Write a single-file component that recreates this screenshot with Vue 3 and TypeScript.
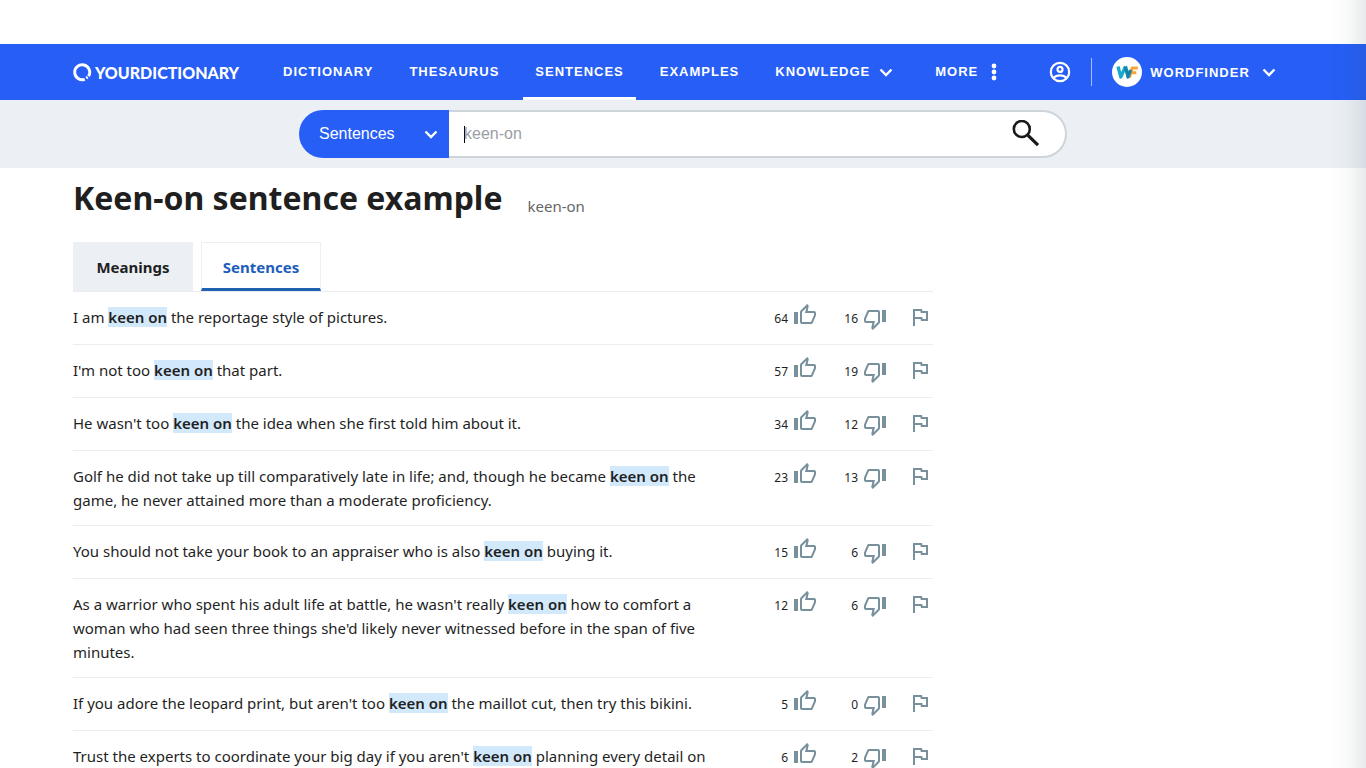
<script setup lang="ts">
import { ref } from 'vue'

interface Sentence {
  before: string
  after: string
  up: number
  down: number
}

const term = 'keen on'
const query = ref('')
const links: string[] = ['Dictionary', 'Thesaurus', 'Sentences', 'Examples']
const sentences: Sentence[] = [
  { before: 'I am ', after: ' the reportage style of pictures.', up: 64, down: 16 },
  { before: "I'm not too ", after: ' that part.', up: 57, down: 19 },
  { before: "He wasn't too ", after: ' the idea when she first told him about it.', up: 34, down: 12 },
  { before: 'Golf he did not take up till comparatively late in life; and, though he became ', after: ' the game, he never attained more than a moderate proficiency.', up: 23, down: 13 },
  { before: 'You should not take your book to an appraiser who is also ', after: ' buying it.', up: 15, down: 6 },
  { before: "As a warrior who spent his adult life at battle, he wasn't really ", after: " how to comfort a woman who had seen three things she'd likely never witnessed before in the span of five minutes.", up: 12, down: 6 },
  { before: "If you adore the leopard print, but aren't too ", after: ' the maillot cut, then try this bikini.', up: 5, down: 0 },
  { before: "Trust the experts to coordinate your big day if you aren't ", after: ' planning every detail on', up: 6, down: 2 },
]
</script>

<template>
  <div class="page">
    <header class="bar">
      <a class="logo" href="#">
        <svg width="19" height="19" viewBox="0 0 19 19" fill="none" stroke="#fff" stroke-width="2.9">
          <path d="M11.800 16.300A7.500 7.500 0 1 1 15.600 13.200" />
          <path d="M13.200 13.400l1.500 2.400" stroke-width="1.800" />
        </svg>
        <span>YOURDICTIONARY</span>
      </a>
      <nav class="nav">
        <a v-for="l in links" :key="l" href="#" class="item" :class="{ active: l === 'Sentences' }">{{ l }}</a>
        <button type="button" class="item">
          Knowledge
          <svg class="chev" width="14" height="9" viewBox="0 0 14 9"><path d="M1.500 1.500L7 7l5.500-5.500" /></svg>
        </button>
        <button type="button" class="item more">
          More
          <svg width="6" height="18" viewBox="0 0 6 18" fill="#fff"><circle cx="3" cy="3" r="2.400" /><circle cx="3" cy="9" r="2.400" /><circle cx="3" cy="15" r="2.400" /></svg>
        </button>
      </nav>
      <div class="account">
        <button type="button" class="user" aria-label="Account">
          <svg width="22" height="22" viewBox="0 0 22 22" fill="none" stroke="#fff" stroke-width="2.200">
            <circle cx="11" cy="11" r="9.200" /><circle cx="11" cy="8.400" r="2.500" /><path d="M4.400 17c3.400-3.500 9.800-3.500 13.200 0" />
          </svg>
        </button>
        <button type="button" class="item finder">
          <svg width="30" height="30" viewBox="0 0 30 30" fill="none" stroke-width="3.300" stroke-linejoin="round">
            <circle cx="15" cy="15" r="15" fill="#fff" />
            <path d="M25.800 11h-5.600l-2.800 9.500M19.500 15.700h4.800" stroke="#f7a334" stroke-width="3" />
            <path d="M6 9.500l2.800 10.500L13.500 9.500" stroke="#19aacb" />
            <path d="M13.500 9.500L16 20l2.600-7" stroke="#1584ad" />
          </svg>
          Wordfinder
          <svg class="chev" width="14" height="9" viewBox="0 0 14 9"><path d="M1.500 1.500L7 7l5.500-5.500" /></svg>
        </button>
      </div>
    </header>

    <form class="search" role="search" @submit.prevent>
      <div class="pill">
        <div class="scope">
          <select aria-label="Search in">
            <option>Sentences</option>
          </select>
          <svg class="chev" width="14" height="9" viewBox="0 0 14 9"><path d="M1.500 1.500L7 7l5.500-5.500" /></svg>
        </div>
        <div class="field">
          <i class="caret"></i>
          <input v-model="query" type="text" placeholder="keen-on" aria-label="Search term" />
          <button type="submit" aria-label="Search">
            <svg width="28" height="28" viewBox="0 0 28 28" fill="none" stroke="#1a1a1a" stroke-width="2.600"><circle cx="9.800" cy="9" r="8" /><path d="M15.500 14.800L26 25.200" stroke-width="3.200" /></svg>
          </button>
        </div>
      </div>
    </form>

    <main class="content">
      <div class="heading">
        <h1>Keen-on sentence example</h1>
        <span>keen-on</span>
      </div>
      <nav class="tabs">
        <a href="#">Meanings</a>
        <a href="#" class="on">Sentences</a>
      </nav>
      <ul class="list">
        <li v-for="(s, i) in sentences" :key="i">
          <p>{{ s.before }}<b>{{ term }}</b>{{ s.after }}</p>
          <div class="votes">
            <button type="button" class="up" aria-label="Like">
              {{ s.up }}
              <svg width="24" height="24" viewBox="0 0 24 24"><path d="M9 21h9c.83 0 1.540-.5 1.840-1.220l3.020-7.050c.09-.23.14-.47.14-.73v-2c0-1.100-.9-2-2-2h-6.310l.95-4.570.03-.32c0-.41-.17-.79-.44-1.060L14.170 1 7.580 7.590C7.220 7.950 7 8.450 7 9v10c0 1.100.9 2 2 2zM9 9l4.340-4.340L12 10h9v2l-3 7H9V9zM1 9h4v12H1z" /></svg>
            </button>
            <button type="button" class="down" aria-label="Dislike">
              {{ s.down }}
              <svg width="24" height="24" viewBox="0 0 24 24"><path d="M15 3H6c-.83 0-1.540.5-1.840 1.220l-3.020 7.050c-.09.230-.14.470-.14.730v2c0 1.100.9 2 2 2h6.310l-.95 4.570-.03.320c0 .410.170.790.440 1.060L9.830 23l6.590-6.590c.36-.36.580-.86.580-1.410V5c0-1.100-.9-2-2-2zm0 12l-4.340 4.340L12 14H3v-2l3-7h9v10zm4-12h4v12h-4z" /></svg>
            </button>
            <button type="button" class="flag" aria-label="Report">
              <svg width="24" height="24" viewBox="0 0 24 24"><path d="M12.360 6l.4 2H18v6h-3.360l-.4-2H7V6h5.360M14 4H5v17h2v-7h5.600l.4 2h7V6h-5.600L14 4z" /></svg>
            </button>
          </div>
        </li>
      </ul>
    </main>
    <div class="edge"></div>
  </div>
</template>

<style>
body {
  margin: 0;
  background: #fff;
}
</style>

<style scoped>
* {
  box-sizing: border-box;
}
.page {
  padding-top: 44px;
  color: #1f1f1f;
  font-family: 'Noto Sans', sans-serif;
}
button {
  padding: 0;
  border: 0;
  background: none;
  color: inherit;
  font: inherit;
  cursor: pointer;
}
a {
  color: inherit;
  text-decoration: none;
}
svg {
  display: block;
  flex: none;
}
.chev {
  fill: none;
  stroke: #fff;
  stroke-width: 2.4;
}
.bar {
  display: flex;
  height: 56px;
  padding: 0 73px;
  background: #265ef6;
  color: #fff;
}
.logo {
  display: flex;
  align-items: center;
  gap: 3px;
  width: 198px;
  font: 900 16px Lato, sans-serif;
}
.nav {
  display: flex;
  gap: 12px;
}
.item {
  display: flex;
  align-items: center;
  height: 56px;
  padding: 2px 12px 0;
  border-bottom: 3px solid transparent;
  font: 700 13px 'Liberation Sans', Arial, sans-serif;
  letter-spacing: 1px;
  text-transform: uppercase;
}
.item .chev {
  margin-left: 9px;
  margin-top: 2px;
}
.item.active {
  border-color: #fff;
}
.nav .more {
  margin-left: 6px;
  gap: 13px;
}
.account {
  display: flex;
  align-items: center;
  margin-left: 40px;
}
.user {
  display: flex;
  align-items: center;
  height: 28px;
  padding-right: 20px;
  border-right: 1px solid #a9c0fd;
}
.account .finder {
  border: 0;
  padding: 0 0 0 20px;
  gap: 8px;
}
.finder .chev {
  margin-left: 4px;
  margin-top: 0;
}
.search {
  display: flex;
  justify-content: center;
  padding: 10px 24px;
  background: #ecf0f5;
}
.pill {
  display: flex;
  width: 768px;
  height: 48px;
}
.scope {
  display: flex;
  align-items: center;
  width: 150px;
  padding: 0 11px 0 20px;
  border-radius: 24px 0 0 24px;
  background: #265ef6;
}
.scope select {
  flex: 1;
  padding: 0 0 2px;
  border: 0;
  background: none;
  appearance: none;
  color: #fff;
  font: 16px 'Liberation Sans', Arial, sans-serif;
}
.field {
  display: flex;
  align-items: center;
  flex: 1;
  padding: 0 25px 0 15px;
  border: 2px solid #cdd5da;
  border-left: 0;
  border-radius: 0 24px 24px 0;
  background: #fff;
}
.caret {
  width: 1px;
  height: 17px;
  margin-right: -1px;
  background: #000;
}
.field input {
  flex: 1;
  min-width: 0;
  padding: 0;
  border: 0;
  outline: 0;
  background: none;
  font: 16px 'Liberation Sans', Arial, sans-serif;
}
.field input::placeholder {
  color: #9b9ea4;
}
.content {
  max-width: 933px;
  padding-left: 73px;
}
.heading {
  display: flex;
  align-items: flex-start;
  gap: 25px;
  height: 74px;
}
h1 {
  margin: 0;
  font-size: 32px;
  line-height: 60px;
}
.heading span {
  color: #666;
  font-size: 15px;
  line-height: 76px;
}
.tabs {
  display: flex;
  gap: 8px;
  border-bottom: 1px solid #e9ebee;
}
.tabs a {
  width: 120px;
  height: 49px;
  border: 1px solid #ecf0f5;
  background: #ecf0f5;
  font-weight: 700;
  font-size: 15px;
  line-height: 49px;
  text-align: center;
}
.tabs .on {
  border-bottom: 3px solid #1f61b0;
  background: #fff;
  color: #1d5dbb;
}
.list {
  margin: 0;
  padding: 0;
  list-style: none;
}
.list li {
  display: flex;
  justify-content: space-between;
  padding: 13px 0;
  border-bottom: 1px solid #ebedf0;
}
.list p {
  width: 640px;
  margin: 0;
  font-size: 15px;
  line-height: 24px;
}
.list b {
  background: #d2e8fb;
  font-weight: 600;
}
.votes {
  display: flex;
  height: 26px;
  padding-right: 1px;
  font-size: 12px;
}
.votes button {
  display: flex;
  align-items: center;
  justify-content: flex-end;
  gap: 5px;
  width: 70px;
}
.votes svg {
  fill: #78909c;
}
.up svg {
  margin-bottom: 6px;
}
.down svg {
  margin-top: 2px;
}
.votes .flag {
  width: 45px;
}
.flag svg {
  margin-bottom: 2px;
}
.edge {
  position: fixed;
  top: 0;
  right: 0;
  bottom: 0;
  width: 36px;
  background: linear-gradient(to right, rgba(60, 80, 90, 0), rgba(60, 80, 90, 0.03) 50%, rgba(60, 80, 90, 0.12));
  pointer-events: none;
}
</style>
